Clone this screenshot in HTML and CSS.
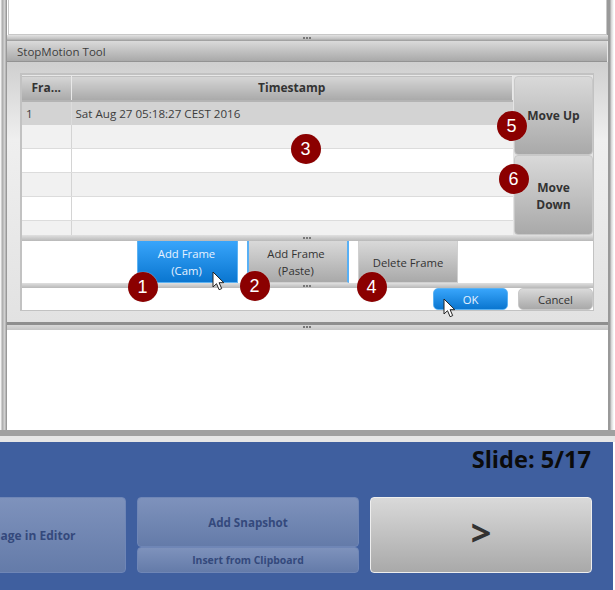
FILE: index.html
```html
<!DOCTYPE html>
<html lang="en">
<head>
    <meta charset="UTF-8">
    <title>StopMotion Tool</title>
    <link rel="stylesheet" href="styles.css">
</head>
<body>
    <div class="app">
        <div class="workspace">
            <div class="pane pane-top"></div>
            <div class="splitter"><span class="grip"></span></div>
            <div class="window">
                <div class="window-title">StopMotion Tool</div>
                <div class="window-body">
                    <div class="panel">
                        <div class="table-row-area">
                            <table class="frames">
                                <thead>
                                    <tr><th class="col-frame">Fra...</th><th>Timestamp</th></tr>
                                </thead>
                                <tbody>
                                    <tr class="selected"><td>1</td><td>Sat Aug 27 05:18:27 CEST 2016</td></tr>
                                    <tr class="odd"><td></td><td></td></tr>
                                    <tr><td></td><td></td></tr>
                                    <tr class="odd"><td></td><td></td></tr>
                                    <tr><td></td><td></td></tr>
                                    <tr class="odd last"><td></td><td></td></tr>
                                </tbody>
                            </table>
                            <div class="move-buttons">
                                <button class="btn btn-move btn-up">Move Up</button>
                                <button class="btn btn-move btn-down">Move<br>Down</button>
                            </div>
                        </div>
                        <div class="inner-splitter splitter-table"><span class="grip"></span></div>
                        <div class="frame-actions">
                            <button class="btn btn-frame btn-blue">Add Frame<br>(Cam)</button>
                            <button class="btn btn-frame btn-focus">Add Frame<br>(Paste)</button>
                            <button class="btn btn-frame">Delete Frame</button>
                        </div>
                        <div class="inner-splitter"><span class="grip"></span></div>
                        <div class="dialog-actions">
                            <button class="btn btn-dialog btn-blue">OK</button>
                            <button class="btn btn-dialog">Cancel</button>
                        </div>
                    </div>
                </div>
            </div>
            <div class="splitter splitter-low"><span class="grip"></span></div>
            <div class="pane pane-bottom"></div>
        </div>
        <div class="footer">
            <div class="slide-count">Slide: 5/17</div>
            <div class="footer-buttons">
                <button class="btn-off btn-editor">Edit Image in Editor</button>
                <div class="snapshot">
                    <button class="btn-off btn-snapshot">Add Snapshot</button>
                    <button class="btn-off btn-clipboard">Insert from Clipboard</button>
                </div>
                <button class="btn btn-next">&gt;</button>
            </div>
        </div>

        <span class="badge badge-1">1</span>
        <span class="badge badge-2">2</span>
        <span class="badge badge-3">3</span>
        <span class="badge badge-4">4</span>
        <span class="badge badge-5">5</span>
        <span class="badge badge-6">6</span>

        <svg class="cursor cursor-cam" width="13" height="20" viewBox="0 0 13 20"><path d="M1 1v15l3.5-3.3 2.6 6 2.6-1.1-2.6-5.9h4.7z" fill="#fff" stroke="#222" stroke-width="1"/></svg>
        <svg class="cursor cursor-ok" width="13" height="20" viewBox="0 0 13 20"><path d="M1 1v15l3.5-3.3 2.6 6 2.6-1.1-2.6-5.9h4.7z" fill="#fff" stroke="#222" stroke-width="1"/></svg>
    </div>
</body>
</html>
```

FILE: styles.css
```css
* { box-sizing: border-box; }
html, body { margin: 0; padding: 0; }
body { width: 615px; height: 590px; overflow: hidden; background: #fff; font-family: "Open Sans", "Noto Sans", sans-serif; color: #333; }
button { font-family: inherit; margin: 0; padding: 0; cursor: pointer; }

.app { position: relative; width: 615px; height: 590px; display: flex; flex-direction: column; }

.workspace { height: 442px; flex: none; display: flex; flex-direction: column; padding: 0 7px 0 7px; background: linear-gradient(90deg, #f4f4f4 0, #f4f4f4 1px, #a8a8a8 2px, #d8d8d8 5px, #999 6px, #999 7px, #fff 7px, #fff 607px, #999 607px, #999 610px, #d0d0d0 611px, #fff 614px); border-bottom: 6px solid #e6e6e6; box-shadow: inset 0 -6px 0 #a0a0a0; }
.pane { background: #fff; border: 1px solid #c8c8c8; }
.pane-top { height: 35px; margin: 0 1px; border-top: 0; }
.pane-bottom { height: 100px; border: 0; flex: none; }

.splitter { height: 6px; flex: none; background: linear-gradient(#e2e2e2, #c4c4c4 60%, #999); position: relative; }
.splitter-low { height: 5px; background: linear-gradient(#d8d8d8, #c6c6c6); }
.splitter-low .grip { top: 1px; }
.grip { position: absolute; left: 296px; top: 2px; width: 8px; height: 2px; background: repeating-linear-gradient(90deg, #777 0 2px, transparent 2px 3px); }

.window { height: 284px; flex: none; display: flex; flex-direction: column; background: #e6e6e6; border-bottom: 3px solid #8f8f8f; }
.window-title { height: 21px; flex: none; padding: 3px 0 0 10px; font-size: 11.5px; line-height: 16px; color: #3d3d3d; background: linear-gradient(#dadada, #a9a9a9); border-bottom: 1px solid #939393; margin-right: 1px; }
.window-body { flex: 1; padding: 11px 14px 11px 13px; background: linear-gradient(#cfcfcf, #efefef 30%, #e2e2e2); }

.panel { height: 238px; border: 2px solid #c2c2c2; border-right-width: 1px; border-bottom-width: 1px; background: #fff; display: flex; flex-direction: column; }
.table-row-area { display: flex; height: 160px; flex: none; background: #e4e4e4; }

.frames { width: 491px; border-collapse: collapse; table-layout: fixed; font-size: 11.6px; background: #fff; flex: none; }
.frames th { height: 25px; padding: 0; font-size: 12px; font-weight: 700; color: #333; background: linear-gradient(#d6d6d6, #a9a9a9); border-right: 1px solid #e8e8e8; border-bottom: 2px solid #b4b4b4; border-top: 1px solid #e8e8e8; }
.frames .col-frame { width: 49px; }
.frames td { height: 24px; padding: 1px 0 0 4px; border-right: 1px solid #d4d4d4; border-bottom: 1px solid #dcdcdc; color: #3c3c3c; line-height: 16px; }
.frames td + td { border-right: 0; }
.frames .odd td { background: #f1f1f1; }
.frames .selected td { background: #d3d3d3; border-bottom: 0; border-right-color: #dcdcdc; }
.frames .last td { height: 14px; border-bottom: 0; }

.btn { border: 1px solid #c8c8c8; border-radius: 4px; background: linear-gradient(#d9d9d9, #a9a9a9); color: #333; font-size: 11.3px; line-height: 17px; }
.btn-blue { background: linear-gradient(#38a5fb, #0a76d0); color: #e6f2ff; border-color: #5cb2f2; }

.move-buttons { flex: 1; display: flex; flex-direction: column; padding: 1px 0 0 1px; }
.btn-move { height: 80px; flex: none; font-weight: 700; font-size: 12px; }
.btn-up { height: 79px; }
.btn-down { padding-top: 2px; }

.inner-splitter { height: 5px; flex: none; background: linear-gradient(#e0e0e0, #b8b8b8); position: relative; }
.inner-splitter .grip { left: 281px; top: 2px; }
.splitter-table { height: 6px; }

.frame-actions { height: 42px; flex: none; display: flex; padding-left: 115px; background: #fff; }
.btn-frame { width: 101px; height: 42px; padding-top: 1px; border-radius: 0; border: 1px solid #d0d0d0; border-top: 0; }
.btn-frame.btn-blue { padding-right: 2px; border-color: #5cb2f2; }
.btn-frame + .btn-frame { margin-left: 9px; }
.btn-frame:last-child { width: 100px; }
.btn-focus { border-left: 2px solid #58b0f5; border-right: 2px solid #58b0f5; width: 102px; padding-right: 4px; }

.dialog-actions { height: 22px; flex: none; display: flex; justify-content: flex-end; gap: 10px; background: #fff; }
.btn-dialog { width: 75px; height: 22px; border-radius: 5px; }

.footer { flex: 1; background: #3f5f9f; padding: 3px 22px 0 0; margin-right: 2px; display: flex; flex-direction: column; }
.slide-count { text-align: right; font-size: 23.6px; line-height: 28px; font-weight: 700; color: #0b0b0b; }
.footer-buttons { margin-top: 24px; display: flex; gap: 11px; margin-left: -96px; }
.btn-off { border: 1px solid #6f86b6; border-radius: 4px; background: linear-gradient(#7e92bc, #647ba9); color: #34497c; font-weight: 700; font-size: 11.6px; }
.btn-editor { width: 222px; height: 76px; flex: none; font-size: 12px; padding-left: 4px; }
.snapshot { width: 222px; height: 76px; flex: none; display: flex; flex-direction: column; }
.btn-snapshot { height: 50px; flex: none; }
.btn-clipboard { height: 26px; flex: none; font-size: 10.4px; }
.btn-next { width: 222px; height: 76px; flex: none; border-color: #eee; font-size: 36px; line-height: 30px; font-weight: 700; padding-bottom: 4px; }

.badge { position: absolute; width: 30px; height: 30px; border-radius: 50%; background: #8b0000; color: #fff; font-family: "Liberation Sans", sans-serif; font-size: 18px; line-height: 30px; text-align: center; box-shadow: 0 0 1px #ddd; }
.badge-1 { left: 127.5px; top: 272px; }
.badge-2 { left: 239.5px; top: 271px; }
.badge-3 { left: 290.5px; top: 134px; }
.badge-4 { left: 356.5px; top: 272px; }
.badge-5 { left: 496.5px; top: 111px; }
.badge-6 { left: 498.5px; top: 164px; }

.cursor { position: absolute; }
.cursor-cam { left: 212px; top: 271px; }
.cursor-ok { left: 443px; top: 298px; }
```
